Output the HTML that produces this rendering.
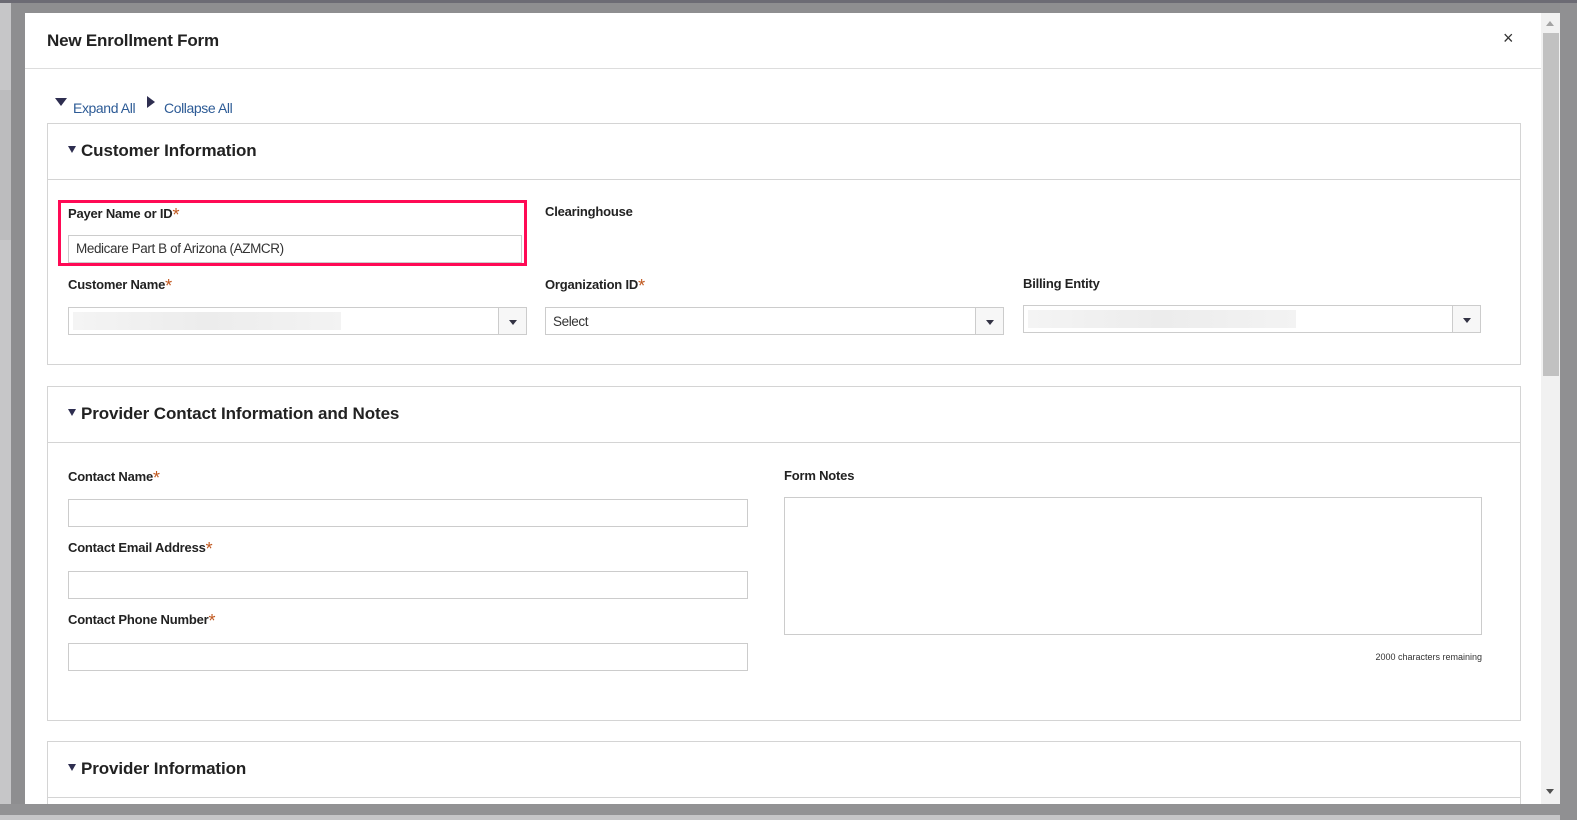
<!DOCTYPE html>
<html><head><meta charset="utf-8"><style>
*{box-sizing:border-box;margin:0;padding:0}
body{width:1577px;height:820px;overflow:hidden;background:#8e8e90;font-family:"Liberation Sans",Arial,sans-serif;position:relative}
.a{position:absolute}
.lbl{position:absolute;font-size:13px;font-weight:bold;color:#222;letter-spacing:-0.2px}
.st{color:#c0581f;font-weight:normal;font-size:18px;line-height:10px;position:relative;top:3px}
.in{position:absolute;border:1px solid #ccc;background:#fff;height:28px;font-size:13.5px;color:#333;padding:6px 7px;letter-spacing:-0.4px}
.dd{position:absolute;right:0;top:0;bottom:0;width:28px;border-left:1px solid #ccc;background:#f7f7f7}
.dd:after{content:"";position:absolute;left:10px;top:12px;border-left:4px solid transparent;border-right:4px solid transparent;border-top:5px solid #334}
.box{position:absolute;left:47px;width:1474px;border:1px solid #d4d4d4;background:#fff}
.hd{position:absolute;left:0;right:0;height:56px;border-bottom:1px solid #d4d4d4}
.ht{position:absolute;left:33px;top:17px;font-size:17px;font-weight:bold;color:#222;letter-spacing:-0.1px}
.tri{position:absolute;left:20px;top:22px;border-left:4px solid transparent;border-right:4px solid transparent;border-top:7px solid #2e2e50}
.blur{position:absolute;left:4px;top:4px;width:268px;height:18px;background:linear-gradient(90deg,#f4f4f4,#ececec,#f3f3f3)}
</style></head><body>
<div class="a" style="left:0;top:0;width:1577px;height:3px;background:#6c6b74"></div>
<div class="a" style="left:0;top:3px;width:11px;height:817px;background:#c6c6c8"></div>
<div class="a" style="left:0;top:815px;width:1577px;height:5px;background:#c6c6c8"></div>
<div class="a" style="left:0;top:90px;width:11px;height:150px;background:#bcbcbe"></div>
<div class="a" style="left:1560px;top:3px;width:17px;height:817px;background:#909092"></div>
<div class="a" style="left:25px;top:13px;width:1516px;height:791px;background:#fff;overflow:hidden">
 <div class="a" style="left:22px;top:18px;font-size:17px;font-weight:bold;color:#222;letter-spacing:-0.2px">New Enrollment Form</div>
 <div class="a" style="left:1478px;top:15px;font-size:18px;color:#333">×</div>
 <div class="a" style="left:0;top:55px;width:1516px;height:1px;background:#ddd"></div>
 <div class="a" style="left:30px;top:85px;border-left:6px solid transparent;border-right:6px solid transparent;border-top:8px solid #2e2e50"></div>
 <div class="a" style="left:48px;top:87px;font-size:14px;color:#2d5b96;letter-spacing:-0.4px">Expand All</div>
 <div class="a" style="left:122px;top:83px;border-top:6px solid transparent;border-bottom:6px solid transparent;border-left:8px solid #2e2e50"></div>
 <div class="a" style="left:139px;top:87px;font-size:14px;color:#2d5b96;letter-spacing:-0.4px">Collapse All</div>
</div>
<div class="box" style="top:123px;height:242px">
 <div class="hd" style="top:0"><div class="tri"></div><div class="ht">Customer Information</div></div>
</div>
<div class="a" style="left:58px;top:200px;width:469px;height:66px;border:3px solid #ff0a55"></div>
<div class="lbl" style="left:68px;top:206px">Payer Name or ID<span class="st">*</span></div>
<div class="in" style="left:68px;top:235px;width:454px;padding-top:5px">Medicare Part B of Arizona (AZMCR)</div>
<div class="lbl" style="left:545px;top:204px">Clearinghouse</div>
<div class="lbl" style="left:68px;top:277px">Customer Name<span class="st">*</span></div>
<div class="in" style="left:68px;top:307px;width:459px"><div class="blur"></div><div class="dd"></div></div>
<div class="lbl" style="left:545px;top:277px">Organization ID<span class="st">*</span></div>
<div class="in" style="left:545px;top:307px;width:459px;padding-top:6px">Select<div class="dd"></div></div>
<div class="lbl" style="left:1023px;top:276px">Billing Entity</div>
<div class="in" style="left:1023px;top:305px;width:458px"><div class="blur"></div><div class="dd"></div></div>
<div class="box" style="top:386px;height:335px">
 <div class="hd" style="top:0"><div class="tri"></div><div class="ht">Provider Contact Information and Notes</div></div>
</div>
<div class="lbl" style="left:68px;top:469px">Contact Name<span class="st">*</span></div>
<div class="in" style="left:68px;top:499px;width:680px"></div>
<div class="lbl" style="left:68px;top:540px">Contact Email Address<span class="st">*</span></div>
<div class="in" style="left:68px;top:571px;width:680px"></div>
<div class="lbl" style="left:68px;top:612px">Contact Phone Number<span class="st">*</span></div>
<div class="in" style="left:68px;top:643px;width:680px"></div>
<div class="lbl" style="left:784px;top:468px">Form Notes</div>
<div class="in" style="left:784px;top:497px;width:698px;height:138px"></div>
<div class="a" style="left:1300px;top:652px;width:182px;text-align:right;font-size:9px;color:#333">2000 characters remaining</div>
<div class="box" style="top:741px;height:63px;border-bottom:none">
 <div class="hd" style="top:0"><div class="tri"></div><div class="ht">Provider Information</div></div>
</div>
<div class="a" style="left:0;top:804px;width:1560px;height:11px;background:#929294"></div>
<div class="a" style="left:1541px;top:13px;width:19px;height:791px;background:#f1f1f1"></div>
<div class="a" style="left:1543px;top:33px;width:16px;height:343px;background:#c1c1c1"></div>
<div class="a" style="left:1546px;top:21px;border-left:4px solid transparent;border-right:4px solid transparent;border-bottom:5px solid #a3a3a3"></div>
<div class="a" style="left:1546px;top:789px;border-left:4px solid transparent;border-right:4px solid transparent;border-top:5px solid #505050"></div>
</body></html>
